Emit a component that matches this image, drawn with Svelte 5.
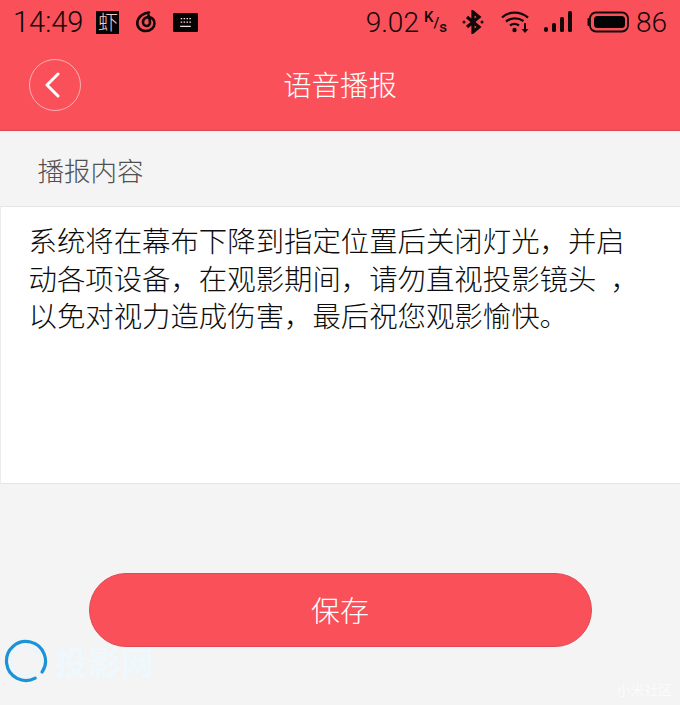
<script lang="ts">
  const title = "语音播报";
  const label = "播报内容";
  const content = [
    "系统将在幕布下降到指定位置后关闭灯光，并启",
    "动各项设备，在观影期间，请勿直视投影镜头\u2002，",
    "以免对视力造成伤害，最后祝您观影愉快。"
  ];
</script>

<div class="page">
  <header class="top">
    <!-- Status bar -->
    <div class="status">
      <div class="status-left">
        <span class="time">14:49</span>
        <span class="xia">虾</span>
        <svg class="music" width="24" height="24" viewBox="0 0 24 24" fill="none" stroke="#120808" stroke-width="2.6" stroke-linecap="round">
          <path d="M15 2.5c-3.6.4-10.6 2.8-11.6 9.300-.8 5.200 3 9.200 8.300 9.200 5 0 8.800-3.400 8.800-7.700 0-3.800-2.900-6.200-6-6.200-3.200 0-5.500 2.200-5.500 5 0 2.300 1.600 3.900 3.600 3.900 2.200 0 3.500-1.700 3.400-3.600-.1-2.300-.8-5-1.500-7.200" />
        </svg>
        <svg class="keys" width="25" height="21" viewBox="0 0 26 20">
          <rect width="26" height="20" rx="1.500" fill="#050303" />
          <path d="M8 6h1.600M11 6h1.600M14 6h1.600M17 6h1.600M8 9.500h1.600M11 9.500h1.600M14 9.500h1.600M17 9.500h1.600M7.500 14h11" stroke="#f5d8d8" stroke-width="1.300" />
        </svg>
      </div>
      <div class="status-right">
        <span class="speed">9.02</span>
        <span class="unit"><sup>K</sup>/<sub>s</sub></span>
        <svg class="bt" width="22" height="24" viewBox="0 0 22 24" fill="none" stroke="#120808" stroke-width="3.200">
          <path d="M5 7l12 10-6 5V2l6 5L5 17" />
          <circle cx="2" cy="12" r="1.500" fill="#120808" stroke="none" />
          <circle cx="20" cy="12" r="1.500" fill="#120808" stroke="none" />
        </svg>
        <svg class="wifi" width="29" height="24" viewBox="0 0 29 24" fill="none" stroke="#120808" stroke-width="2.300">
          <path d="M1 7.500C8 1 19 1 27 7.500M5 11.500c5-4 12-4 17.500-.5M9 15.500c2.800-2 6-2 9 0" />
          <circle cx="13.500" cy="20" r="2.200" fill="#120808" stroke="none" />
          <path d="M24 13v7" stroke-width="2" />
          <path d="M20.500 19h7L24 23z" fill="#120808" stroke="none" />
        </svg>
        <svg class="signal" width="30" height="24" viewBox="0 0 30 24" fill="#120808">
          <rect x="1" y="17" width="4" height="5" rx="2" />
          <rect x="9" y="13" width="4" height="9" rx="1.500" />
          <rect x="17" y="7" width="4" height="15" rx="1.500" />
          <rect x="25" y="1" width="4" height="21" rx="1.500" />
        </svg>
        <svg class="battery" width="43" height="24" viewBox="0 0 43 24" fill="none">
          <rect x="4" y="2.500" width="38" height="19" rx="6" stroke="#120808" stroke-width="1.800" />
          <rect x="8" y="6" width="31" height="12" rx="3.500" fill="#050303" />
          <path d="M2.500 9v6" stroke="#120808" stroke-width="2" stroke-linecap="round" />
        </svg>
        <span class="level">86</span>
      </div>
    </div>

    <!-- Title row -->
    <div class="nav">
      <button class="back" aria-label="返回">
        <svg width="16" height="26" viewBox="0 0 16 26" fill="none" stroke="#fff" stroke-width="3" stroke-linecap="round" stroke-linejoin="round">
          <path d="M14 2L3 13l11 11" />
        </svg>
      </button>
      <h1>{title}</h1>
    </div>
  </header>

  <div class="label">{label}</div>

  <div class="content">
    {#each content as line}
      <div class="line">{line}</div>
    {/each}
  </div>

  <div class="actions">
    <button class="save">保存</button>
  </div>

  <!-- watermarks -->
  <div class="mark-left">
    <svg width="44" height="44" viewBox="0 0 44 44" fill="none">
      <circle cx="22" cy="22" r="14" stroke="#e9f6fc" stroke-width="1.500" />
      <path d="M38.100 33A19.500 19.500 0 1 0 31.200 39.200" stroke="#1a93d8" stroke-width="3.200" stroke-linecap="round" />
    </svg>
    <span>投影网</span>
  </div>
  <div class="mark-right">小米社区</div>
</div>

<style>
  :global(body) {
    margin: 0;
    background: #f4f4f4;
  }

  .page {
    position: relative;
    width: 680px;
    height: 705px;
    overflow: hidden;
    background: #f4f4f4;
    font-family: "Noto Sans CJK SC", "Liberation Sans", sans-serif;
  }

  .top {
    height: 131px;
    box-sizing: border-box;
    background: #f9505a;
    border-bottom: 1px solid #dd4650;
  }

  /* Status bar */
  .status {
    display: flex;
    justify-content: space-between;
    align-items: center;
    height: 44px;
    padding: 0 13px;
    color: #120808;
    font-family: Roboto, "Liberation Sans", sans-serif;
    font-weight: 300;
    font-size: 28px;
  }

  .status-left,
  .status-right {
    display: flex;
    align-items: center;
  }

  .time {
    font-size: 29px;
  }

  .xia {
    width: 23px;
    height: 23px;
    margin-left: 13px;
    background: #050303;
    color: #f6c8c8;
    font-size: 20px;
    font-family: "Noto Sans CJK SC", sans-serif;
    line-height: 22px;
    text-align: center;
  }

  .music {
    margin-left: 15px;
  }

  .keys {
    margin-left: 15px;
  }

  .unit {
    width: 27px;
    margin-left: 5px;
    font-size: 15px;
    font-weight: 500;
    line-height: 1;
  }

  .unit sup,
  .unit sub {
    font-size: 15px;
  }

  .bt {
    margin-left: 11px;
  }

  .wifi {
    margin-left: 17px;
  }

  .signal {
    margin-left: 13px;
  }

  .battery {
    margin-left: 13px;
  }

  .level {
    margin-left: 7px;
  }

  /* Title row */
  .nav {
    position: relative;
    display: flex;
    justify-content: center;
    align-items: center;
    height: 86px;
    padding-bottom: 8px;
    box-sizing: border-box;
  }

  .nav h1 {
    margin: 0;
    color: #fff;
    font-size: 28.400px;
    font-weight: 300;
  }

  .back {
    position: absolute;
    left: 29px;
    top: 15px;
    display: flex;
    align-items: center;
    justify-content: center;
    width: 52px;
    height: 52px;
    padding: 0 6px 0 0;
    background: transparent;
    border: 1px solid #fbb0b4;
    border-radius: 50%;
  }

  .label {
    height: 75px;
    box-sizing: border-box;
    padding-left: 37.500px;
    color: #505050;
    font-size: 26.500px;
    font-weight: 300;
    line-height: 77px;
  }

  .content {
    height: 278px;
    box-sizing: border-box;
    padding: 14px 0 0 27.500px;
    background: #fff;
    border: 1px solid #e4e4e4;
    border-left-color: #ececec;
    border-right: none;
    color: #0c0c0c;
    font-size: 28.400px;
    font-weight: 300;
    line-height: 37.500px;
  }

  .line {
    white-space: nowrap;
  }

  .actions {
    display: flex;
    justify-content: center;
    padding-top: 89px;
  }

  .save {
    width: 503px;
    height: 74px;
    padding: 0 0 3px;
    background: #f9505a;
    border: 1px solid #e04a54;
    border-radius: 37px;
    color: #fff;
    font-family: inherit;
    font-size: 29px;
    font-weight: 300;
  }

  .mark-left {
    position: absolute;
    left: 4px;
    top: 639px;
    display: flex;
    align-items: center;
    gap: 7px;
    color: #eef8fd;
    font-size: 33px;
    font-weight: 700;
    line-height: 44px;
  }

  .mark-right {
    position: absolute;
    right: 8px;
    top: 680px;
    color: #fbfbfb;
    font-size: 13.800px;
    line-height: 18px;
  }
</style>
